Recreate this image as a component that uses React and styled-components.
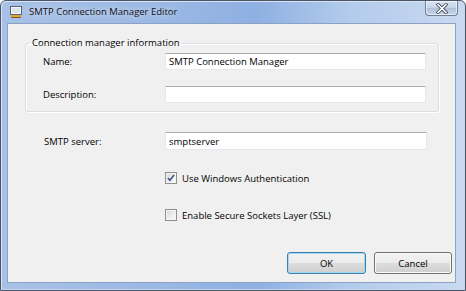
import React from 'react';
import styled, { createGlobalStyle } from 'styled-components';

const GlobalStyle = createGlobalStyle`
  html, body {
    margin: 0;
    padding: 0;
    background: #ffffff;
  }
  body {
    font-family: "Open Sans", "Noto Sans", sans-serif;
    font-size: 9.5px;
    color: #000000;
  }
`;

const Window = styled.div`
  box-sizing: border-box;
  width: 466px;
  height: 291px;
  display: flex;
  flex-direction: column;
  border: 1px solid #4b5566;
  border-radius: 6px 6px 0 0;
  padding: 0 9px 7px 6px;
  background: linear-gradient(90deg, #a9c1e6 0%, #9ab8e4 35%, #8eb0e2 55%, #b3cbec 75%, #c9d9f0 100%);
  box-shadow: inset 1px 1px 0 #d8e4f4, inset -1px -1px 0 #c6d6ee;
`;

const TitleBar = styled.div`
  height: 22px;
  display: flex;
  align-items: center;
  gap: 7px;
  padding-left: 3px;
`;

const TitleText = styled.span`
  flex: 1;
  font-size: 9.5px;
  color: #111111;
  text-shadow: 0 0 6px rgba(255, 255, 255, 0.9);
  padding-bottom: 1px;
`;

const CloseButton = styled.div`
  align-self: flex-start;
  margin-right: -2px;
  width: 33px;
  height: 15px;
  box-sizing: border-box;
  border: 1px solid #6f7e95;
  border-top: none;
  border-radius: 0 0 4px 4px;
  background: linear-gradient(180deg, #dbe5f2 0%, #c2d2e8 50%, #aebfd8 51%, #c8d6ea 100%);
  box-shadow: inset 0 0 0 1px rgba(255, 255, 255, 0.55);
  display: flex;
  align-items: center;
  justify-content: center;
`;

const Client = styled.div`
  flex: 1;
  display: flex;
  flex-direction: column;
  background: #f0f0f0;
  border: 1px solid #8aa2c6;
  box-sizing: border-box;
  padding: 0 3px 8px 17px;
`;

const Group = styled.fieldset`
  margin: 12px 13px 0 0;
  padding: 3px 12px 8px 17px;
  border: 1px solid #d5dfe5;
  border-radius: 3px;
  box-shadow: inset 1px 1px 0 #ffffff, 1px 1px 0 #ffffff;
  display: flex;
  flex-direction: column;
  gap: 16px;
`;

const Legend = styled.legend`
  padding: 0 3px;
  margin-left: -14px;
  font-size: 9.5px;
  line-height: 14px;
`;

const FieldRow = styled.div`
  display: grid;
  grid-template-columns: ${p => p.$labelWidth}px 1fr;
  align-items: center;
  padding: ${p => p.$pad || '0'};
`;

const Label = styled.label`
  font-size: 9.5px;
`;

const TextBox = styled.div`
  box-sizing: border-box;
  height: ${p => p.$h}px;
  background: #ffffff;
  border: 1px solid #e3e9ef;
  border-top-color: #abadb3;
  padding: 0 3px;
  display: flex;
  align-items: center;
  font-size: 9.5px;
`;

const CheckRow = styled.div`
  display: flex;
  align-items: center;
  gap: 5px;
  height: 16px;
  margin: ${p => p.$margin};
  font-size: 9.5px;
`;

const Box = styled.span`
  box-sizing: border-box;
  width: 12px;
  height: 12px;
  border: 1px solid #8e8f8f;
  background: linear-gradient(135deg, #d6d6d6 0%, #efefef 60%, #ffffff 100%);
  box-shadow: inset 0 0 0 1px #f4f4f4;
  display: flex;
  align-items: center;
  justify-content: center;
`;

const ButtonRow = styled.div`
  margin-top: auto;
  display: flex;
  justify-content: flex-end;
  gap: 8px;
`;

const Button = styled.button`
  box-sizing: border-box;
  width: ${p => p.$w}px;
  height: 22px;
  font-family: inherit;
  font-size: 9.5px;
  color: #000000;
  border-radius: 3px;
  border: 1px solid ${p => (p.$default ? '#3c7fb1' : '#707070')};
  background: linear-gradient(180deg, #f2f2f2 0%, #ebebeb 50%, #dddddd 51%, #cfcfcf 100%);
  box-shadow: inset 0 0 0 1px ${p => (p.$default ? '#a4d8f2' : '#fbfbfb')};
  padding: 0;
`;

const AppIcon = () => (
  <svg width="12" height="12" viewBox="0 0 12 12">
    <rect x="0.5" y="0.5" width="11" height="8" fill="#f4f6f8" stroke="#5a6372" />
    <rect x="2" y="2" width="8" height="5" fill="#d9e3ee" />
    <rect x="1" y="9" width="10" height="2" fill="#e1a63a" />
    <rect x="1" y="11" width="10" height="1" fill="#7a5a20" />
  </svg>
);

const CloseIcon = () => (
  <svg width="12" height="11" viewBox="0 0 12 11">
    <path d="M2 1.5 L10 9.5 M10 1.5 L2 9.5" stroke="#3f4755" strokeWidth="3.2" strokeLinecap="square" />
    <path d="M2 1.5 L10 9.5 M10 1.5 L2 9.5" stroke="#ffffff" strokeWidth="1.6" strokeLinecap="square" />
  </svg>
);

const CheckMark = () => (
  <svg width="8" height="8" viewBox="0 0 9 9">
    <path d="M1 4.5 L3.3 7 L8 1.2" fill="none" stroke="#3a5587" strokeWidth="1.7" />
  </svg>
);

export default function App() {
  return (
    <>
      <GlobalStyle />
      <Window>
        <TitleBar>
          <AppIcon />
          <TitleText>SMTP Connection Manager Editor</TitleText>
          <CloseButton>
            <CloseIcon />
          </CloseButton>
        </TitleBar>
        <Client>
          <Group>
            <Legend>Connection manager information</Legend>
            <FieldRow $labelWidth={122}>
              <Label>Name:</Label>
              <TextBox $h={17}>SMTP Connection Manager</TextBox>
            </FieldRow>
            <FieldRow $labelWidth={122}>
              <Label>Description:</Label>
              <TextBox $h={17} />
            </FieldRow>
          </Group>
          <FieldRow $labelWidth={121} $pad="20px 25px 0 19px">
            <Label>SMTP server:</Label>
            <TextBox $h={18}>smptserver</TextBox>
          </FieldRow>
          <CheckRow $margin="20px 0 0 140px">
            <Box>
              <CheckMark />
            </Box>
            Use Windows Authentication
          </CheckRow>
          <CheckRow $margin="21px 0 0 140px">
            <Box />
            Enable Secure Sockets Layer (SSL)
          </CheckRow>
          <ButtonRow>
            <Button $w={79} $default>OK</Button>
            <Button $w={78}>Cancel</Button>
          </ButtonRow>
        </Client>
      </Window>
    </>
  );
}
